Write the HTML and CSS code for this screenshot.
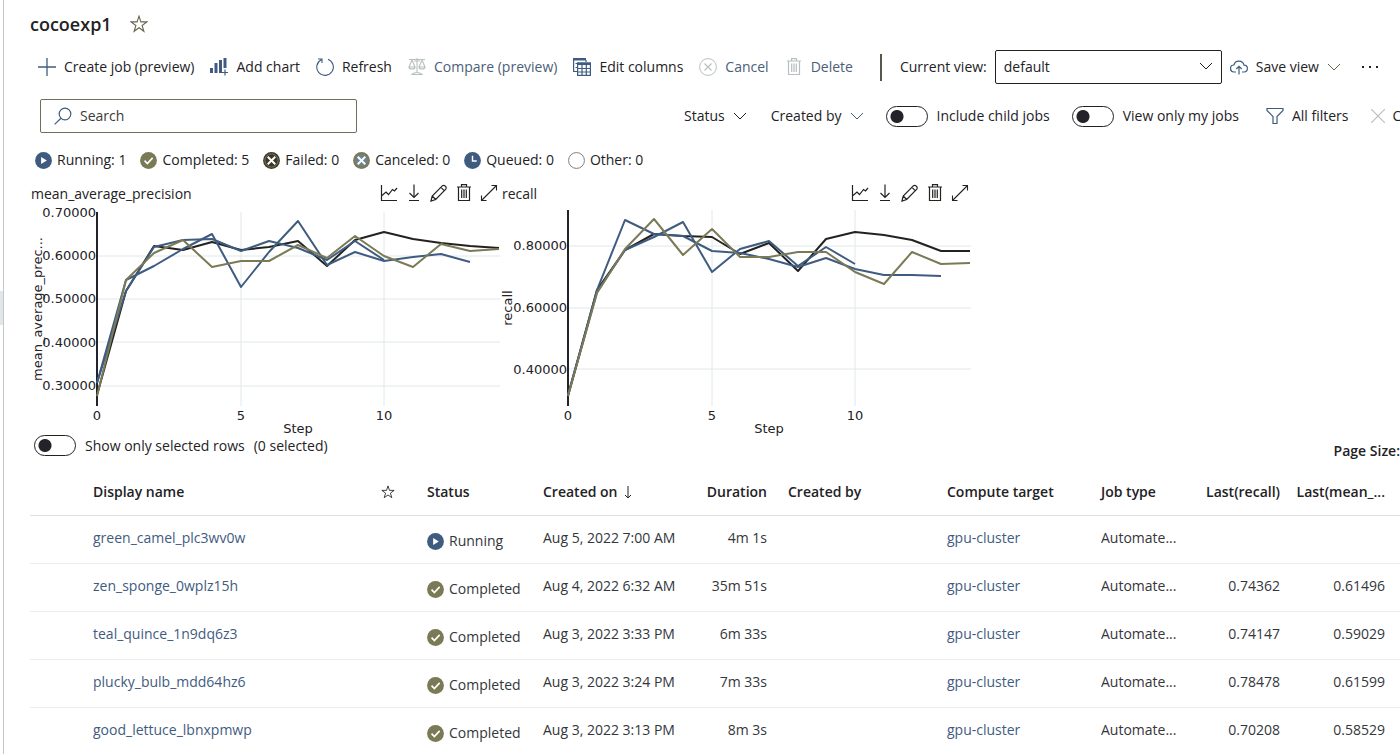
FILE: index.html
```
<!DOCTYPE html>
<html lang="en">
<head>
<meta charset="utf-8">
<title>cocoexp1</title>
<link rel="stylesheet" href="styles.css">
</head>
<body>
<svg class="defs" width="0" height="0" aria-hidden="true">
  <symbol id="star" viewBox="0 0 18 18"><path d="M9 1.2l1.900 5.700h6l-4.800 3.600 1.800 5.800L9 12.800l-4.900 3.500 1.800-5.800-4.800-3.600h6z" fill="none" stroke="currentColor" stroke-width="1.1"/></symbol>
  <symbol id="chevron" viewBox="0 0 14 14"><path d="M1 4l6 6 6-6" fill="none" stroke="currentColor" stroke-width="1"/></symbol>
  <symbol id="running" viewBox="0 0 18 18"><circle cx="9" cy="9" r="8.900" fill="#3f5c80"/><path d="M6.5 5.4v7.2l6-3.6z" fill="#fff"/></symbol>
  <symbol id="done" viewBox="0 0 18 18"><circle cx="9" cy="9" r="8.900" fill="#7b7a56"/><path d="M4.8 9.2l3 3 5.6-6" fill="none" stroke="#fff" stroke-width="1.8"/></symbol>
  <symbol id="linechart" viewBox="0 0 18 18"><path d="M1.5 1v15.5H17M2 11.500l4-3.500 2.500 2.500 4-5 2 1.500L17 4" fill="none" stroke="currentColor" stroke-width="1.2"/></symbol>
  <symbol id="download" viewBox="0 0 18 18"><path d="M9 .5v13M4.500 9L9 13.500 13.500 9M4 16.500h10" fill="none" stroke="currentColor" stroke-width="1.2"/></symbol>
  <symbol id="pencil" viewBox="0 0 18 18"><path d="M1 17l1.200-5L12.500 1.700q1.300-1 2.800.4t.5 3L5.700 15.500zM11 3.300L14.400 6.800M2.200 12l3.500 3.500" fill="none" stroke="currentColor" stroke-width="1.2"/></symbol>
  <symbol id="trash" viewBox="0 0 18 18"><path d="M2 3h14M3.500 3v13.500h11V3M6.500 3V.6h5V3M6.700 5.500v8.500M9 5.500v8.500M11.300 5.500v8.500" fill="none" stroke="currentColor" stroke-width="1.2"/></symbol>
  <symbol id="expand" viewBox="0 0 18 18"><path d="M1.500 16.500l15-15M11.500 1.500h5v5M1.500 11.500v5h5" fill="none" stroke="currentColor" stroke-width="1.1"/></symbol>
</svg>
<div class="app">
  <div class="rail"><div class="rail-marker"></div></div>
  <main class="main">
    <header class="title-row">
      <h1>cocoexp1</h1>
      <button class="icon-button" aria-label="Favorite"><svg class="icon olive"><use href="#star"/></svg></button>
    </header>

    <div class="toolbar">
      <button class="command"><svg class="icon blue" viewBox="0 0 18 18"><path d="M9 0v18M0 9h18" stroke="currentColor" stroke-width="1.300"/></svg>Create job (preview)</button>
      <button class="command"><svg class="icon blue" viewBox="0 0 18 18"><path d="M0 10h3v5H0zM4.500 5h3v10h-3zM9 2h3v13H9zM13.500 0h3v10h-3z" fill="currentColor"/><path d="M15 11.500v6M12 14.500h6" stroke="currentColor" stroke-width="1.200"/></svg>Add chart</button>
      <button class="command"><svg class="icon blue" viewBox="0 0 18 18"><path d="M12 1.300A8.300 8.300 0 1 1 5.200 1.700M2 1h4v4" fill="none" stroke="currentColor" stroke-width="1.100"/></svg>Refresh</button>
      <button class="command muted"><svg class="icon faded" viewBox="0 0 18 18"><path d="M1 1.500h16M9 0v15M6 3h6M4 16.500q2-2 5-2t5 2zM4 2L1 9h6zM14 2l-3 7h6zM1 9q0 2 3 2t3-2M11 9q0 2 3 2t3-2" fill="none" stroke="currentColor" stroke-width="1.100"/></svg>Compare (preview)</button>
      <button class="command"><svg class="icon blue" viewBox="0 0 18 18"><path d="M0 0h13v2.500H0z" fill="currentColor"/><path d="M.6 1v12.500H4M13 2v2M2.500 5.500h2M2.500 9.500h2M4.600 5h12.800v12.400H4.600zM4.600 10.500h12.800M4.600 14h12.800M9 7v10.400M13.300 7v10.400" fill="none" stroke="currentColor" stroke-width="1.200"/><path d="M4 4.500h14V7H4z" fill="currentColor"/></svg>Edit columns</button>
      <button class="command muted"><svg class="icon faded" viewBox="0 0 18 18"><path d="M5.500 5.500l7 7M12.500 5.500l-7 7" stroke="currentColor" stroke-width="1.100"/><circle cx="9" cy="9" r="8.400" fill="none" stroke="currentColor"/></svg>Cancel</button>
      <button class="command muted"><svg class="icon faded"><use href="#trash"/></svg>Delete</button>
      <span class="divider"></span>
      <label class="view-label" for="view">Current view:</label>
      <span class="select-box">
        <select id="view"><option>default</option></select>
        <svg class="chevron select-chevron"><use href="#chevron"/></svg>
      </span>
      <button class="command save"><svg class="icon blue" viewBox="0 0 18 18"><path d="M6 14H4.200a3.500 3.500 0 0 1-.3-7A5.200 5.200 0 0 1 14 7.200a3.400 3.400 0 0 1 0 6.800h-2M9 16.500V8.500M6.300 11L9 8.300l2.700 2.700" fill="none" stroke="currentColor" stroke-width="1.200"/></svg>Save view<svg class="chevron olive"><use href="#chevron"/></svg></button>
      <button class="icon-button more" aria-label="More"><svg class="icon" viewBox="0 0 18 18"><path d="M1 8h2v2H1zM8 8h2v2H8zM15 8h2v2h-2z" fill="currentColor"/></svg></button>
    </div>

    <div class="filters">
      <label class="search"><svg class="icon blue" viewBox="0 0 18 18"><circle cx="11" cy="7" r="5.800" fill="none" stroke="currentColor" stroke-width="1.200"/><path d="M7 11.200L.6 17.400" stroke="currentColor" stroke-width="1.200"/></svg><input type="text" placeholder="Search" aria-label="Search"></label>
      <div class="filter-items">
        <button class="drop">Status<svg class="chevron"><use href="#chevron"/></svg></button>
        <button class="drop">Created by<svg class="chevron blue"><use href="#chevron"/></svg></button>
        <label class="toggle"><input type="checkbox" role="switch">Include child jobs</label>
        <label class="toggle"><input type="checkbox" role="switch">View only my jobs</label>
        <button class="command all-filters"><svg class="icon blue" viewBox="0 0 18 18"><path d="M1 1.500h16v2L11 9.500v7H7v-7L1 3.500z" fill="none" stroke="currentColor" stroke-width="1.200"/></svg>All filters</button>
        <button class="command clear"><svg class="chevron faded" viewBox="0 0 14 14"><path d="M0 0l14 14M14 0L0 14" stroke="currentColor" stroke-width="1.200"/></svg>Clear all</button>
      </div>
    </div>

    <div class="legend">
      <span class="state"><svg class="badge"><use href="#running"/></svg>Running: 1</span>
      <span class="state"><svg class="badge"><use href="#done"/></svg>Completed: 5</span>
      <span class="state"><svg class="badge" viewBox="0 0 18 18"><circle cx="9" cy="9" r="8.900" fill="#3a382a"/><circle cx="9" cy="9" r="7" fill="none" stroke="#7b7a56"/><path d="M5 5l8 8M13 5l-8 8" stroke="#fff" stroke-width="2"/></svg>Failed: 0</span>
      <span class="state"><svg class="badge" viewBox="0 0 18 18"><circle cx="9" cy="9" r="8.900" fill="#7b7a56"/><circle cx="9" cy="9" r="6.500" fill="#6d8290"/><path d="M5 5l8 8M13 5l-8 8" stroke="#fff" stroke-width="2"/></svg>Canceled: 0</span>
      <span class="state"><svg class="badge" viewBox="0 0 18 18"><circle cx="9" cy="9" r="8.900" fill="#3f5c80"/><path d="M9 4v5.500h4.500" fill="none" stroke="#fff" stroke-width="1.500"/></svg>Queued: 0</span>
      <span class="state"><svg class="badge" viewBox="0 0 18 18"><circle cx="9" cy="9" r="8.400" fill="none" stroke="#77796c"/></svg>Other: 0</span>
    </div>

    <div class="charts">
      <section class="chart">
        <div class="chart-head">
          <h2>mean_average_precision</h2>
          <button class="icon-button" aria-label="Chart type"><svg class="icon"><use href="#linechart"/></svg></button>
          <button class="icon-button" aria-label="Download"><svg class="icon"><use href="#download"/></svg></button>
          <button class="icon-button" aria-label="Edit"><svg class="icon"><use href="#pencil"/></svg></button>
          <button class="icon-button" aria-label="Delete"><svg class="icon"><use href="#trash"/></svg></button>
          <button class="icon-button" aria-label="Expand"><svg class="icon"><use href="#expand"/></svg></button>
        </div>
        <svg class="plot" viewBox="0 0 471 230">
          <path class="grid" d="M66 51h403M66 94h403M66 137h403M66 181h403M210 7v194M353 7v194"/>
          <path class="axis" d="M66 7v194"/>
          <g class="lines" transform="translate(66 0)">
            <polyline class="ink" points="0,190 29,86 57,41 86,45 115,37 144,45 172,42 201,36 230,61 258,35 287,27 316,34 344,38 373,41 402,43"/>
            <polyline class="navy" points="0,178 29,86 57,42 86,35 115,34 144,46 172,36 201,43 230,55 258,36 287,55"/>
            <polyline class="navy" points="0,178 29,75 57,61 86,44 115,29 144,82 172,47 201,16 230,60 258,47 287,56 316,52 344,49 373,57"/>
            <polyline class="moss" points="0,191 29,75 57,48 86,35 115,62 144,56 172,56 201,40 230,53 258,31 287,51 316,62 344,39 373,46 402,44"/>
          </g>
          <g class="ticks-y"><text x="65" y="12">0.70000</text><text x="65" y="55">0.60000</text><text x="65" y="98">0.50000</text><text x="65" y="142">0.40000</text><text x="65" y="185">0.30000</text></g>
          <g class="ticks-x"><text x="66" y="215">0</text><text x="210" y="215">5</text><text x="353" y="215">10</text><text x="267" y="228">Step</text><text transform="translate(11 104) rotate(-90)">mean_average_prec...</text></g>
        </svg>
      </section>
      <section class="chart">
        <div class="chart-head">
          <h2>recall</h2>
          <button class="icon-button" aria-label="Chart type"><svg class="icon"><use href="#linechart"/></svg></button>
          <button class="icon-button" aria-label="Download"><svg class="icon"><use href="#download"/></svg></button>
          <button class="icon-button" aria-label="Edit"><svg class="icon"><use href="#pencil"/></svg></button>
          <button class="icon-button" aria-label="Delete"><svg class="icon"><use href="#trash"/></svg></button>
          <button class="icon-button" aria-label="Expand"><svg class="icon"><use href="#expand"/></svg></button>
        </div>
        <svg class="plot" viewBox="0 0 471 230">
          <path class="grid" d="M66 41h403M66 103h403M66 164h403M210 5v196M353 5v196"/>
          <path class="axis" d="M66 5v196"/>
          <g class="lines" transform="translate(66 0)">
            <polyline class="ink" points="0,191 29,85 57,45 86,29 115,31 144,32 172,49 201,38 230,66 258,34 287,27 316,30 344,35 373,46 402,46"/>
            <polyline class="navy" points="0,190 29,85 57,15 86,29 115,31 144,46 172,48 201,54 230,62 258,53 287,64 316,70 344,70 373,71"/>
            <polyline class="navy" points="0,190 29,87 57,45 86,32 115,17 144,67 172,44 201,36 230,61 258,42 287,59"/>
            <polyline class="moss" points="0,191 29,88 57,44 86,14 115,50 144,24 172,52 201,52 230,47 258,47 287,67 316,79 344,47 373,59 402,58"/>
          </g>
          <g class="ticks-y"><text x="65" y="45">0.80000</text><text x="65" y="107">0.60000</text><text x="65" y="169">0.40000</text></g>
          <g class="ticks-x"><text x="66" y="215">0</text><text x="210" y="215">5</text><text x="353" y="215">10</text><text x="267" y="228">Step</text><text transform="translate(10 103) rotate(-90)">recall</text></g>
        </svg>
      </section>
    </div>

    <div class="table-bar">
      <label class="toggle"><input type="checkbox" role="switch">Show only selected rows<span>(0 selected)</span></label>
      <span class="page-size">Page Size:</span>
    </div>

    <table class="jobs">
      <colgroup><col class="c-pick"><col class="c-name"><col class="c-star"><col class="c-status"><col class="c-created"><col class="c-duration"><col class="c-by"><col class="c-target"><col class="c-type"><col class="c-recall"><col class="c-map"><col></colgroup>
      <thead>
        <tr><th></th><th>Display name</th><th><svg class="star-head"><use href="#star"/></svg></th><th>Status</th><th><span class="sorted">Created on<svg class="sort" viewBox="0 0 8 14"><path d="M4 1v12M1 10l3 3 3-3" fill="none" stroke="currentColor"/></svg></span></th><th class="num">Duration</th><th class="by">Created by</th><th>Compute target</th><th>Job type</th><th class="num">Last(recall)</th><th class="num">Last(mean_...</th><th></th></tr>
      </thead>
      <tbody>
        <tr><td></td><td><a href="#">green_camel_plc3wv0w</a></td><td></td><td><span class="status"><svg class="badge"><use href="#running"/></svg>Running</span></td><td>Aug 5, 2022 7:00 AM</td><td class="num">4m 1s</td><td></td><td><a href="#">gpu-cluster</a></td><td>Automate...</td><td></td><td></td><td></td></tr>
        <tr><td></td><td><a href="#">zen_sponge_0wplz15h</a></td><td></td><td><span class="status"><svg class="badge"><use href="#done"/></svg>Completed</span></td><td>Aug 4, 2022 6:32 AM</td><td class="num">35m 51s</td><td></td><td><a href="#">gpu-cluster</a></td><td>Automate...</td><td class="num">0.74362</td><td class="num">0.61496</td><td></td></tr>
        <tr><td></td><td><a href="#">teal_quince_1n9dq6z3</a></td><td></td><td><span class="status"><svg class="badge"><use href="#done"/></svg>Completed</span></td><td>Aug 3, 2022 3:33 PM</td><td class="num">6m 33s</td><td></td><td><a href="#">gpu-cluster</a></td><td>Automate...</td><td class="num">0.74147</td><td class="num">0.59029</td><td></td></tr>
        <tr><td></td><td><a href="#">plucky_bulb_mdd64hz6</a></td><td></td><td><span class="status"><svg class="badge"><use href="#done"/></svg>Completed</span></td><td>Aug 3, 2022 3:24 PM</td><td class="num">7m 33s</td><td></td><td><a href="#">gpu-cluster</a></td><td>Automate...</td><td class="num">0.78478</td><td class="num">0.61599</td><td></td></tr>
        <tr><td></td><td><a href="#">good_lettuce_lbnxpmwp</a></td><td></td><td><span class="status"><svg class="badge"><use href="#done"/></svg>Completed</span></td><td>Aug 3, 2022 3:13 PM</td><td class="num">8m 3s</td><td></td><td><a href="#">gpu-cluster</a></td><td>Automate...</td><td class="num">0.70208</td><td class="num">0.58529</td><td></td></tr>
      </tbody>
    </table>
  </main>
</div>
</body>
</html>
```
FILE: styles.css
```
* { box-sizing: border-box; }
body {
  margin: 0;
  overflow: hidden;
  background: #fff;
  color: #23221f;
  font: 14px/20px "Open Sans", "Noto Sans", sans-serif;
}
button, input, select { font: inherit; color: inherit; }
button { padding: 0; border: 0; background: none; white-space: nowrap; }
.defs { display: block; }
.app { display: flex; height: 100vh; overflow: hidden; }
.rail { flex: none; width: 4px; border-right: 1px solid #c3c7c9; }
.rail-marker { height: 34px; margin-top: 291px; background: #e1e7e8; }
.main { flex: 1; min-width: 0; padding-left: 26px; }

.icon { flex: none; display: block; width: 18px; height: 18px; }
.badge { flex: none; display: block; width: 17px; height: 17px; }
.chevron { flex: none; display: block; width: 14px; height: 14px; }
.blue { color: #3f5c80; }
.olive { color: #66664d; }
.faded { color: #b9bfc0; }
.icon-button { display: block; }

.title-row { display: flex; align-items: center; gap: 18px; height: 48px; }
.title-row h1 { margin: 0; font-size: 18px; line-height: 24px; font-weight: 600; }

.toolbar { display: flex; align-items: center; height: 38px; gap: 16px; padding-left: 8px; }
.command { display: flex; align-items: center; gap: 8px; }
.muted { color: #4b6078; }
.divider { flex: none; width: 2px; height: 27px; margin-left: 11px; background: #55584a; }
.view-label { white-space: nowrap; margin: 0 -8px 0 2px; }
.select-box { flex: none; position: relative; width: 227px; margin-right: -8px; }
.select-box select {
  display: block;
  width: 100%;
  height: 34px;
  padding: 0 8px;
  border: 1px solid #23221f;
  border-radius: 2px;
  background: #fff;
  appearance: none;
}
.select-chevron { position: absolute; top: 9px; right: 9px; pointer-events: none; }
.more { margin-left: 4px; }

.filters { display: flex; align-items: center; height: 34px; margin-top: 13px; padding-left: 10px; }
.search {
  flex: none;
  display: flex;
  align-items: center;
  gap: 8px;
  width: 317px;
  height: 34px;
  padding-left: 13px;
  border: 1px solid #6c705c;
  border-radius: 2px;
}
.search input { flex: 1; min-width: 0; padding: 0; border: 0; outline: 0; background: none; }
.search input::placeholder { color: #3a3a38; opacity: 1; }
.filter-items { flex: 1; display: flex; align-items: center; min-width: 0; margin-left: 327px; gap: 24px; overflow: hidden; }
.filter-items .toggle { margin-left: -2px; }
.drop { display: flex; align-items: center; gap: 8px; }
.all-filters, .clear { flex: none; }
.all-filters { margin-left: 3px; }
.clear { margin-left: -2px; }

.toggle { flex: none; display: flex; align-items: center; gap: 9px; white-space: nowrap; }
.toggle input {
  appearance: none;
  width: 42px;
  height: 21px;
  margin: 0;
  border: 1px solid #23221f;
  border-radius: 11px;
  background: radial-gradient(circle at 10px 50%, #23232a 6px, transparent 7px);
}

.legend { display: flex; align-items: center; gap: 14px; height: 20px; margin-top: 17px; padding-left: 5px; }
.state, .status { display: flex; align-items: center; gap: 5px; white-space: nowrap; }

.charts { display: flex; margin-top: 12px; }
.chart { flex: none; width: 471px; margin-left: 1px; }
.chart + .chart { margin-left: 0; }
.chart-head { display: flex; align-items: center; gap: 7px; height: 23px; padding: 0 4px 1px 0; }
.chart-head h2 { flex: 1; margin: 0; padding-top: 2px; font-size: 14px; line-height: 20px; font-weight: 400; }
.plot { display: block; width: 100%; height: auto; overflow: visible; }
.grid { stroke: #e1e8e8; stroke-width: 1; fill: none; }
.axis { stroke: #23232a; stroke-width: 2; }
.lines { fill: none; stroke-width: 2; stroke-linejoin: round; }
.ink { stroke: #23221f; }
.navy { stroke: #3f5c80; }
.moss { stroke: #7b7a56; }
.ticks-y, .ticks-x { font: 13px "DejaVu Sans", sans-serif; fill: #23221f; }
.ticks-y { text-anchor: end; }
.ticks-x { text-anchor: middle; }

.table-bar { display: flex; align-items: center; justify-content: space-between; height: 21px; padding-left: 4px; }
.page-size { font-weight: 600; padding-top: 10px; }

.jobs { width: 100%; margin-top: 12px; table-layout: fixed; border-collapse: collapse; }
.jobs th, .jobs td { height: 48px; padding: 0 8px; text-align: left; white-space: nowrap; border-bottom: 1px solid #eceeee; }
.jobs th { height: 47px; padding-top: 2px; font-weight: 600; border-bottom-color: #dfe2e2; }
.jobs td { padding-bottom: 2px; color: #33363b; }
.jobs .num { text-align: right; }
.jobs .by { padding-left: 13px; }
.jobs a { color: #3f5c80; text-decoration: none; }
.jobs .status { padding-top: 6px; }
.star-head { display: block; width: 14px; height: 14px; }
.sorted { display: flex; align-items: center; gap: 6px; }
.sort { width: 8px; height: 14px; }
.c-pick { width: 55px; }
.c-name { width: 288px; }
.c-star { width: 46px; }
.c-status { width: 116px; }
.c-created { width: 154px; }
.c-duration { width: 86px; }
.c-by { width: 164px; }
.c-target { width: 154px; }
.c-type { width: 100px; }
.c-recall { width: 95px; }
.c-map { width: 105px; }
```
